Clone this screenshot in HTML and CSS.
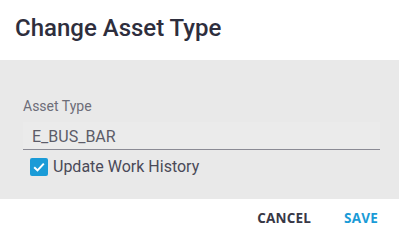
FILE: index.html
```html
<!DOCTYPE html>
<html>
<head>
	<title>Change Asset Type</title>
	<link rel="stylesheet" href="styles.css">
</head>
<body>

<div class="dialog">
	<h1 class="title">Change Asset Type</h1>

	<div class="content">
		<label class="label" for="type">Asset Type</label>
		<div class="field">
			<input type="text" id="type" value="E_BUS_BAR" readonly>
		</div>
		<label class="check">
			<span class="box">
				<svg width="14" height="14" viewBox="0 0 14 14"><path d="M2.2 7.2 L5.5 10.4 L11.8 3.6" fill="none" stroke="#fff" stroke-width="2"/></svg>
			</span>
			<span>Update Work History</span>
		</label>
	</div>

	<div class="actions">
		<a href="#" class="btn">Cancel</a>
		<a href="#" class="btn save">Save</a>
	</div>
</div>

</body>
</html>
```

FILE: styles.css
```css
*{
	margin: 0;
	padding: 0;
	box-sizing: border-box;
}

body{
	font-family: Roboto, "Liberation Sans", sans-serif;
	background: #fff;
}

.dialog{
	width: 399px;
	height: 234px;
	display: flex;
	flex-direction: column;
}

.title{
	height: 60px;
	padding: 14px 0 0 15px;
	font-size: 24px;
	font-weight: 500;
	color: #2e2e3d;
}

.content{
	background: #e9e9e9;
	height: 139px;
	padding: 38px 19px 0 23px;
}

.label{
	display: block;
	font-size: 14px;
	color: #6d6d78;
	line-height: 16px;
}

.field{
	margin-top: 8px;
	border-bottom: 1px solid #8a8a94;
	background: #ebebeb;
}

.field input{
	width: 100%;
	height: 27px;
	border: 0;
	outline: 0;
	background: transparent;
	padding: 2px 0 0 9px;
	font-family: Roboto, sans-serif;
	font-size: 16px;
	color: #5c5c68;
}

.check{
	display: flex;
	align-items: center;
	gap: 5px;
	margin: 7px 0 0 7px;
	font-size: 16px;
	color: #4a4a58;
}

.box{
	width: 18px;
	height: 18px;
	border-radius: 2px;
	background: #1a9bd7;
	display: flex;
	align-items: center;
	justify-content: center;
}

.actions{
	flex: 1;
	display: flex;
	justify-content: flex-end;
	align-items: center;
	gap: 33px;
	padding: 2px 21px 0 0;
}

.btn{
	font-family: "Open Sans", sans-serif;
	font-weight: 700;
	font-size: 13.5px;
	letter-spacing: 0.2px;
	text-transform: uppercase;
	text-decoration: none;
	color: #383846;
}

.save{
	color: #1a9bd7;
}
```
